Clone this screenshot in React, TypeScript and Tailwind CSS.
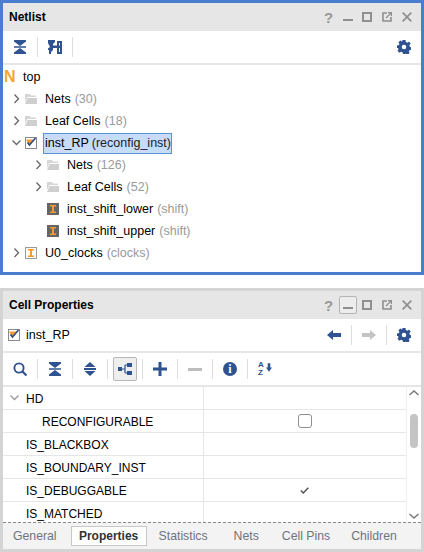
import type { ReactNode } from "react";

const BLUE = "#2f5291";

function Collapse({ color = BLUE }: { color?: string }) {
  return (
    <svg width="12" height="14" viewBox="0 0 12 14">
      <path d="M0 0h12v1.500L6 6 0 1.500z M0 6.200h12v1.600H0z M6 8l6 4.500V14H0v-1.500z" fill={color} />
    </svg>
  );
}

function ExpandIcon() {
  return (
    <svg width="12" height="14" viewBox="0 0 12 14">
      <path d="M6 0l5.500 5H0.500z M0 6h12v2H0z M0.500 9h11L6 14z" fill={BLUE} />
    </svg>
  );
}

function Gear() {
  return (
    <svg width="14" height="14" viewBox="0 0 14 14">
      <path
        fillRule="evenodd"
        d="M5.500 0h3l.4 2 1.500.7L12 1.600l1.700 2.200-1.300 1.500.3 1.200 1.300.9v2.400l-1.500.5-.6 1.300.7 1.600-2.200 1.500-1.500-1-1.200.3L8 14H6l-.7-1.900-1.200-.4-1.600 1-2-1.900 1-1.600-.5-1.200L0 8V5.600l1.900-.5.5-1.200-1-1.600L3.400.6l1.600 1 .2-.1zM7 4.700a2.300 2.300 0 100 4.600 2.300 2.300 0 000-4.600z"
        fill={BLUE}
      />
    </svg>
  );
}

function WindowButtons({ minActive }: { minActive?: boolean }) {
  return (
    <div className="flex items-center">
      <span className="w-[11px] text-center text-[15px] leading-none font-bold text-[#999999]">?</span>
      <span
        className={`ml-[5px] flex h-[18px] w-[18px] items-end justify-center rounded-[2px] border pb-[4px] ${
          minActive ? "border-[#b5b5b5] bg-[#ececec]" : "border-transparent"
        }`}
      >
        <span className="block h-[2px] w-[10px] bg-[#8f8f8f]" />
      </span>
      <svg className="ml-[5px]" width="10" height="10" viewBox="0 0 10 10">
        <rect x="1" y="1" width="8" height="8" fill="none" stroke="#8f8f8f" strokeWidth="2" />
      </svg>
      <svg className="ml-[10px]" width="10" height="10" viewBox="0 0 10 10">
        <path d="M5 1H1v8h8V5" fill="none" stroke="#8f8f8f" strokeWidth="1.600" />
        <path d="M4 6l5-5M6 0.600h3.400V4" fill="none" stroke="#8f8f8f" strokeWidth="1.200" />
      </svg>
      <svg className="ml-[10px]" width="10" height="10" viewBox="0 0 10 10">
        <path d="M0.700 0.700l8.600 8.600M9.300 0.700L0.700 9.300" stroke="#8f8f8f" strokeWidth="1.700" />
      </svg>
    </div>
  );
}

function Divider({ className }: { className: string }) {
  return <span className={`block h-[20px] w-px shrink-0 bg-[#dedede] ${className}`} />;
}

function Chevron({ open, light }: { open?: boolean; light?: boolean }) {
  const stroke = light ? "#9a9a9a" : "#666666";
  return (
    <svg width="9" height="10" viewBox="0 0 9 10" className="shrink-0">
      {open ? (
        <path d="M0.500 2.500L4.500 6.500L8.500 2.500" fill="none" stroke={stroke} strokeWidth="1.300" />
      ) : (
        <path d="M2.500 0.500L6.500 4.800L2.500 9" fill="none" stroke={stroke} strokeWidth="1.300" />
      )}
    </svg>
  );
}

function Folder() {
  return (
    <svg width="12" height="10" viewBox="0 0 12 10" className="shrink-0">
      <path d="M0 0h5l1 1.500h5V3H2.500L0 8z" fill="#d6d6d6" />
      <path d="M2.500 4H12v6H0z" fill="#cfcfcf" />
    </svg>
  );
}

function Inst({ outline }: { outline?: boolean }) {
  return (
    <span
      className={`flex h-[12px] w-[12px] shrink-0 items-center justify-center ${
        outline ? "border border-[#9a9a9a] bg-white" : "bg-[#666666]"
      }`}
    >
      <svg width="6" height="8" viewBox="0 0 6 8">
        <path d="M0 0h6v1.500H4v5h2V8H0V6.500h2v-5H0z" fill="#f59a2e" />
      </svg>
    </span>
  );
}

function CheckedBox() {
  return (
    <span className="relative flex h-[12px] w-[12px] shrink-0 items-center justify-center border border-[#8a8a8a] bg-white">
      <svg width="12" height="12" viewBox="0 0 12 12" className="absolute -left-px -top-px">
        <path d="M1 2.500h7L4.500 9.500z" fill="#f59a2e" />
        <path d="M2.500 5.500l2 2.500L10.500 1" fill="none" stroke="#2f4f86" strokeWidth="1.700" />
      </svg>
    </span>
  );
}

function Row({ indent, children }: { indent: number; children: ReactNode }) {
  return (
    <div className="flex h-[22px] items-center" style={{ paddingLeft: indent }}>
      {children}
    </div>
  );
}

function Hint({ children }: { children: ReactNode }) {
  return <span className="ml-[4px] text-[#9a9a9a]">{children}</span>;
}

function TitleBar({ title, minActive }: { title: string; minActive?: boolean }) {
  return (
    <div className="flex h-[28px] shrink-0 items-center justify-between bg-[#e6e6e6] pl-[6px] pr-[9px]">
      <span className="text-[12px] font-bold text-black">{title}</span>
      <WindowButtons minActive={minActive} />
    </div>
  );
}

function PropRow({ name, indent = 23, children }: { name: string; indent?: number; children?: ReactNode }) {
  return (
    <div className="flex h-[23px] items-center border-b border-[#e6e6e6]">
      <div className="flex h-full w-[201px] shrink-0 items-center border-r border-[#e6e6e6] pt-px" style={{ paddingLeft: indent }}>
        {name}
      </div>
      <div className="flex flex-1 items-center justify-center pr-px">{children}</div>
    </div>
  );
}

const tabs = [
  { label: "General", className: "ml-[10px]" },
  { label: "Properties", className: "ml-[14px]" },
  { label: "Statistics", className: "ml-[12px]" },
  { label: "Nets", className: "ml-[26px]" },
  { label: "Cell Pins", className: "ml-[23px]" },
  { label: "Children", className: "ml-[21px]" },
];

export default function App() {
  return (
    <div className="h-[552px] w-[424px] overflow-hidden bg-white text-[12px] text-black [font-family:'Liberation_Sans',Arial,sans-serif]">
      {/* Netlist */}
      <div className="h-[275px] border-[3px] border-[#4a7dcf]">
        <TitleBar title="Netlist" />
        <div className="flex h-[34px] items-center border-b-2 border-[#e6e6e6] pl-[11px] pr-[10px]">
          <Collapse />
          <Divider className="ml-[11px]" />
          <svg className="ml-[10px]" width="14" height="14" viewBox="0 0 14 14">
            <path
              d="M0 0h7v2L5 4v1.500h4V1h5v13H9V8H5v2L3 12v2H1v-4H0V8.500L2 7 0 3z M11 3v2.500h1V3z M11 8v4h1V8z"
              fillRule="evenodd"
              fill={BLUE}
            />
          </svg>
          <Divider className="ml-[10px]" />
          <span className="ml-auto">
            <Gear />
          </span>
        </div>
        <div className="pt-px text-[12.5px]">
          <Row indent={1}>
            <span className="w-[14px] text-[16px] leading-none font-bold text-[#f5a733]">N</span>
            <span className="ml-[5px]">top</span>
          </Row>
          <Row indent={9}>
            <Chevron />
            <span className="ml-[4px]"><Folder /></span>
            <span className="ml-[8px]">Nets</span>
            <Hint>(30)</Hint>
          </Row>
          <Row indent={9}>
            <Chevron />
            <span className="ml-[4px]"><Folder /></span>
            <span className="ml-[8px]">Leaf Cells</span>
            <Hint>(18)</Hint>
          </Row>
          <Row indent={9}>
            <Chevron open />
            <span className="ml-[4px]"><CheckedBox /></span>
            <span className="ml-[6px] flex h-[21px] items-center border border-[#5a93d4] bg-[#c7dcf9] pl-px">
              inst_RP<span className="ml-[3px] text-[#222222]">(reconfig_inst)</span>
            </span>
          </Row>
          <Row indent={31}>
            <Chevron />
            <span className="ml-[4px]"><Folder /></span>
            <span className="ml-[8px]">Nets</span>
            <Hint>(126)</Hint>
          </Row>
          <Row indent={31}>
            <Chevron />
            <span className="ml-[4px]"><Folder /></span>
            <span className="ml-[8px]">Leaf Cells</span>
            <Hint>(52)</Hint>
          </Row>
          <Row indent={44}>
            <Inst />
            <span className="ml-[8px]">inst_shift_lower</span>
            <Hint>(shift)</Hint>
          </Row>
          <Row indent={44}>
            <Inst />
            <span className="ml-[8px]">inst_shift_upper</span>
            <Hint>(shift)</Hint>
          </Row>
          <Row indent={9}>
            <Chevron />
            <span className="ml-[4px]"><Inst outline /></span>
            <span className="ml-[8px]">U0_clocks</span>
            <Hint>(clocks)</Hint>
          </Row>
        </div>
      </div>

      <div className="h-[13px]" />

      {/* Cell Properties */}
      <div className="flex h-[264px] flex-col border-[3px] border-[#d4d4d4]">
        <TitleBar title="Cell Properties" minActive />
        <div className="flex h-[34px] shrink-0 items-center border-b-2 border-[#e6e6e6] pl-[5px] pr-[10px]">
          <CheckedBox />
          <span className="ml-[6px] text-[12.5px]">inst_RP</span>
          <div className="ml-auto flex items-center">
            <svg width="14" height="10" viewBox="0 0 14 10">
              <path d="M0 5l6-5v3h8v4H6v3z" fill={BLUE} />
            </svg>
            <Divider className="mx-[10px]" />
            <svg width="14" height="10" viewBox="0 0 14 10">
              <path d="M14 5L8 0v3H0v4h8v3z" fill="#c4c4c4" />
            </svg>
            <Divider className="mx-[10px]" />
            <Gear />
          </div>
        </div>
        <div className="flex h-[34px] shrink-0 items-center border-b-2 border-[#e6e6e6] pl-[10px]">
          <svg width="14" height="14" viewBox="0 0 14 14" className="shrink-0">
            <circle cx="6" cy="6" r="4.600" fill="none" stroke={BLUE} strokeWidth="1.900" />
            <path d="M9.500 9.500L13.500 13.500" stroke={BLUE} strokeWidth="2.200" />
          </svg>
          <Divider className="ml-[10px]" />
          <span className="ml-[11px] flex"><Collapse /></span>
          <Divider className="ml-[11px]" />
          <span className="ml-[11px] flex"><ExpandIcon /></span>
          <Divider className="ml-[11px]" />
          <span className="ml-[5px] flex h-[24px] w-[24px] shrink-0 items-center justify-center rounded-[2px] border border-[#b8b8b8] bg-[#eeeeee]">
            <svg width="14" height="12" viewBox="0 0 14 12">
              <path d="M0 4h4v4H0z M9 0h5v4H9z M9 8h5v4H9z" fill={BLUE} />
              <path d="M4 6h3M7 2v8M7 2h2M7 10h2" fill="none" stroke={BLUE} strokeWidth="1.200" />
            </svg>
          </span>
          <Divider className="ml-[5px]" />
          <svg className="ml-[10px] shrink-0" width="14" height="14" viewBox="0 0 14 14">
            <path d="M5.500 0h3v5.500H14v3H8.500V14h-3V8.500H0v-3h5.500z" fill={BLUE} />
          </svg>
          <Divider className="ml-[10px]" />
          <span className="ml-[10px] block h-[3px] w-[14px] shrink-0 bg-[#bdbdbd]" />
          <Divider className="ml-[10px]" />
          <span className="ml-[10px] flex h-[14px] w-[14px] shrink-0 items-center justify-center rounded-full bg-[#2f5291] text-[12px] leading-none font-bold text-white [font-family:'Liberation_Serif',serif]">
            i
          </span>
          <Divider className="ml-[10px]" />
          <span className="relative ml-[10px] flex h-[16px] w-[14px] flex-col text-[8px] leading-[8px] font-bold text-[#2f5291]">
            <span>A</span>
            <span>Z</span>
            <svg className="absolute right-0 top-[2px]" width="6" height="9" viewBox="0 0 7 10">
              <path d="M2 0h3v5h2L3.500 10 0 5h2z" fill={BLUE} />
            </svg>
          </span>
        </div>
        <div className="relative flex min-h-0 flex-1">
          <div className="min-w-0 flex-1 overflow-hidden">
            <PropRow name="HD">
              <span />
            </PropRow>
            <PropRow name="RECONFIGURABLE" indent={39}>
              <span className="block h-[14px] w-[14px] rounded-[3px] border border-[#8f8f8f]" />
            </PropRow>
            <PropRow name="IS_BLACKBOX" />
            <PropRow name="IS_BOUNDARY_INST" />
            <PropRow name="IS_DEBUGGABLE">
              <svg width="9" height="7" viewBox="0 0 9 7">
                <path d="M0.800 3.500L3.300 6L8.300 0.800" fill="none" stroke="#555555" strokeWidth="1.500" />
              </svg>
            </PropRow>
            <PropRow name="IS_MATCHED" />
          </div>
          <div className="flex w-[15px] shrink-0 flex-col items-center justify-between border-l border-[#efefef] py-[3px]">
            <svg width="10" height="6" viewBox="0 0 10 6">
              <path d="M0.500 5L5 1L9.500 5" fill="none" stroke="#777777" strokeWidth="1.400" />
            </svg>
            <svg width="10" height="6" viewBox="0 0 10 6">
              <path d="M0.500 1L5 5L9.500 1" fill="none" stroke="#777777" strokeWidth="1.400" />
            </svg>
          </div>
          <span className="absolute right-[3px] top-[27px] block h-[34px] w-[8px] rounded-[4px] bg-[#c4c4c4]" />
          <span className="absolute left-[7px] top-[6px]">
            <Chevron open light />
          </span>
        </div>
        <div className="flex h-[27px] shrink-0 items-center border-t border-dashed border-[#8a8a8a] bg-[#f3f3f3]">
          {tabs.map((tab) =>
            tab.label === "Properties" ? (
              <span
                key={tab.label}
                className={`flex h-[20px] w-[76px] items-center justify-center border border-[#c8c8c8] bg-white font-bold text-[#333333] ${tab.className}`}
              >
                {tab.label}
              </span>
            ) : (
              <span key={tab.label} className={`text-[12.25px] text-[#6e7480] ${tab.className}`}>
                {tab.label}
              </span>
            ),
          )}
        </div>
      </div>
    </div>
  );
}
